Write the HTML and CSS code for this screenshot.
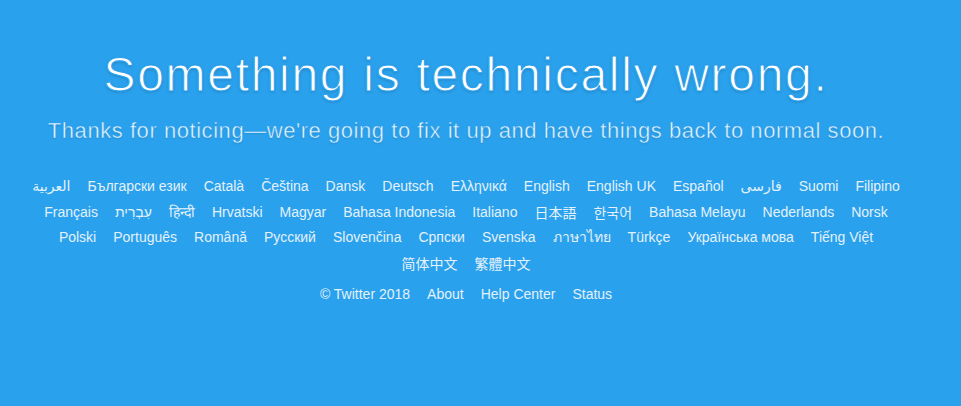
FILE: index.html
```html
<!DOCTYPE html>
<html lang="en">
<head>
  <meta charset="UTF-8" />
  <title>Twitter / Error</title>
  <link rel="stylesheet" href="styles.css">
</head>
<body>
  <div class="container">
    <h1>Something is technically wrong.</h1>
    <p class="lead">Thanks for noticing—we're going to fix it up and have things back to normal soon.</p>

    <ul class="languages">
      <li><a href="#" lang="ar">العربية</a></li>
      <li><a href="#">Български език</a></li>
      <li><a href="#">Català</a></li>
      <li><a href="#">Čeština</a></li>
      <li><a href="#">Dansk</a></li>
      <li><a href="#">Deutsch</a></li>
      <li><a href="#">Ελληνικά</a></li>
      <li><a href="#">English</a></li>
      <li><a href="#">English UK</a></li>
      <li><a href="#">Español</a></li>
      <li><a href="#" lang="fa">فارسی</a></li>
      <li><a href="#">Suomi</a></li>
      <li><a href="#">Filipino</a></li>
      <li><a href="#">Français</a></li>
      <li><a href="#" lang="he">עִבְרִית</a></li>
      <li><a href="#" lang="hi">हिन्दी</a></li>
      <li><a href="#">Hrvatski</a></li>
      <li><a href="#">Magyar</a></li>
      <li><a href="#">Bahasa Indonesia</a></li>
      <li><a href="#">Italiano</a></li>
      <li><a href="#" lang="ja">日本語</a></li>
      <li><a href="#" lang="ko">한국어</a></li>
      <li><a href="#">Bahasa Melayu</a></li>
      <li><a href="#">Nederlands</a></li>
      <li><a href="#">Norsk</a></li>
      <li><a href="#">Polski</a></li>
      <li><a href="#">Português</a></li>
      <li><a href="#">Română</a></li>
      <li><a href="#">Русский</a></li>
      <li><a href="#">Slovenčina</a></li>
      <li><a href="#">Српски</a></li>
      <li><a href="#">Svenska</a></li>
      <li><a href="#" lang="th">ภาษาไทย</a></li>
      <li><a href="#">Türkçe</a></li>
      <li><a href="#">Українська мова</a></li>
      <li><a href="#">Tiếng Việt</a></li>
      <li><a href="#" lang="zh-CN">简体中文</a></li>
      <li><a href="#" lang="zh-TW">繁體中文</a></li>
    </ul>

    <ul class="footer">
      <li>© Twitter 2018</li>
      <li><a href="#">About</a></li>
      <li><a href="#">Help Center</a></li>
      <li><a href="#">Status</a></li>
    </ul>
  </div>
</body>
</html>
```

FILE: styles.css
```css
* { box-sizing: border-box; }

body {
  margin: 0;
  background: #2aa1ec;
  color: #fff;
  font-family: "Liberation Sans", "DejaVu Sans", "Noto Sans CJK SC", sans-serif;
}

.container {
  padding: 0 29px 0 0;
  text-align: center;
}

/* thin the regular face down towards a light weight */
h1 {
  margin: 0;
  padding-top: 45px;
  font-weight: 400;
  font-size: 48px;
  line-height: 60px;
  letter-spacing: 1.7px;
  -webkit-text-stroke: 1.1px #2aa1ec;
  text-shadow: 0 1px 3px rgba(0, 0, 0, 0.22);
}

.lead {
  margin: 12px 0 0;
  font-size: 22px;
  line-height: 28px;
  letter-spacing: 0.55px;
  color: #eef7fe;
  -webkit-text-stroke: 0.5px #2aa1ec;
  text-shadow: 0 1px 2px rgba(0, 0, 0, 0.12);
}

ul {
  list-style: none;
  margin: 0;
  padding: 0;
  display: flex;
  flex-wrap: wrap;
  justify-content: center;
}

.languages {
  margin: 29px auto 0;
  max-width: 872px;
  column-gap: 17px;
  font-size: 14px;
}

.languages li,
.footer li {
  height: 25.5px;
  line-height: 25.5px;
}

.footer {
  margin-top: 6px;
  column-gap: 17px;
  font-size: 14px;
  color: #e3f1fc;
}

a {
  color: #e3f1fc;
  text-decoration: none;
}

a:hover { text-decoration: underline; }

[lang="zh-CN"], [lang="zh-TW"] { font-family: "Noto Sans CJK SC", sans-serif; vertical-align: 2px; }
[lang="ja"] { font-family: "Noto Sans CJK JP", sans-serif; }
[lang="ko"] { font-family: "Noto Sans CJK KR", sans-serif; }
```
